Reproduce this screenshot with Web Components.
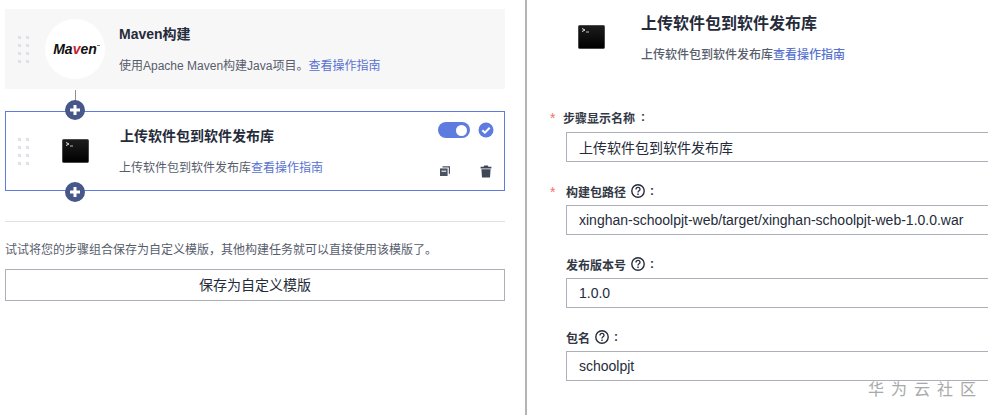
<!DOCTYPE html>
<html lang="zh">
<head>
<meta charset="utf-8">
<title>上传软件包到软件发布库</title>
<style>
    html, body { margin: 0; padding: 0; background: #fff; height: 100%; overflow: hidden; }
    body { font-family: "Liberation Sans", "Noto Sans CJK SC", sans-serif; color: #252b3a; }
</style>
</head>
<body>
<build-page>
    <step-list slot="left">
        <step-card title="Maven构建" guide>
            <span slot="desc">使用Apache Maven构建Java项目。</span>
            <maven-logo slot="icon"></maven-logo>
        </step-card>
        <step-card title="上传软件包到软件发布库" active guide>
            <span slot="desc">上传软件包到软件发布库</span>
            <term-icon slot="icon"></term-icon>
            <step-actions slot="actions"></step-actions>
        </step-card>
    </step-list>
    <step-form slot="right"></step-form>
</build-page>

<script>
    const FONT = '"Liberation Sans", "Noto Sans CJK SC", sans-serif';

    class BuildPage extends HTMLElement {
        connectedCallback() {
            this.attachShadow({ mode: 'open' });
            this.shadowRoot.innerHTML = `
                <style>
                    :host {
                        display: grid;
                        grid-template-columns: 525px 1fr;
                        height: 415px;
                        width: 988px;
                        position: relative;
                        overflow: hidden;
                        font-family: ${FONT};
                    }
                    .left {
                        padding: 9px 20px 0 5px;
                    }
                    .right {
                        border-left: 2px solid #b4b4b4;
                        min-width: 0;
                    }
                    hr {
                        border: 0;
                        border-top: 1px solid #dfe1e6;
                        margin: 30px 0 0;
                    }
                    p {
                        margin: 20px 0 0;
                        font-size: 12px;
                        line-height: 16px;
                        color: #575d6c;
                    }
                    button {
                        display: block;
                        box-sizing: border-box;
                        width: 100%;
                        height: 32px;
                        margin-top: 11px;
                        padding: 0 0 2px;
                        background: #fff;
                        border: 1px solid #adb0b8;
                        font: 14px ${FONT};
                        color: #252b3a;
                    }
                    .mark {
                        position: absolute;
                        left: 868px;
                        top: 380px;
                        font-size: 16px;
                        line-height: 20px;
                        letter-spacing: 7px;
                        color: #a9a9a9;
                        white-space: nowrap;
                    }
                </style>
                <div class="left">
                    <slot name="left"></slot>
                    <hr>
                    <p>试试将您的步骤组合保存为自定义模版，其他构建任务就可以直接使用该模版了。</p>
                    <button>保存为自定义模版</button>
                </div>
                <div class="right">
                    <slot name="right"></slot>
                </div>
                <div class="mark">华为云社区</div>
            `;
        }
    }

    class StepList extends HTMLElement {
        connectedCallback() {
            this.attachShadow({ mode: 'open' });
            this.shadowRoot.innerHTML = `
                <style>
                    :host {
                        display: flex;
                        flex-direction: column;
                        gap: 22px;
                    }
                </style>
                <slot></slot>
            `;
        }
    }

    class StepCard extends HTMLElement {
        connectedCallback() {
            this.attachShadow({ mode: 'open' });
            const title = this.getAttribute('title');
            const active = this.hasAttribute('active');
            const plus = `<svg width="20" height="20" viewBox="0 0 20 20"><circle cx="10" cy="10" r="10" fill="#47578a"/><path d="M10 5v10M5 10h10" stroke="#fff" stroke-width="3"/></svg>`;
            this.shadowRoot.innerHTML = `
                <style>
                    :host {
                        display: grid;
                        grid-template-columns: 40px 60px 1fr auto;
                        box-sizing: border-box;
                        height: 80px;
                        position: relative;
                        background: #f7f7f8;
                    }
                    :host([active]) {
                        grid-template-columns: 39px 60px 1fr auto;
                        background: #fff;
                        border: 1px solid #5e7ce0;
                    }
                    .grip {
                        display: grid;
                        grid-template-columns: 3px 3px;
                        gap: 5px;
                        align-content: center;
                        justify-content: center;
                        padding-right: 4px;
                    }
                    .grip i {
                        width: 3px;
                        height: 3px;
                        background: #dfe1e6;
                    }
                    .icon {
                        display: flex;
                        align-items: center;
                        justify-content: center;
                    }
                    .body {
                        padding: 15px 0 0 14px;
                    }
                    :host([active]) .body { padding: 14px 0 0 15px; }
                    :host([active]) .desc { margin-left: -1px; }
                    h3 {
                        margin: 0;
                        font-size: 14px;
                        line-height: 20px;
                        font-weight: 700;
                        color: #252b3a;
                    }
                    .desc {
                        margin-top: 12px;
                        font-size: 12px;
                        line-height: 20px;
                        color: #575d6c;
                        white-space: nowrap;
                    }
                    a {
                        color: #5872d0;
                        text-decoration: none;
                    }
                    .add {
                        position: absolute;
                        left: 59px;
                        width: 20px;
                        height: 20px;
                        display: block;
                    }
                    .add svg { display: block; }
                    .add.top { top: -12px; }
                    .add.bottom { bottom: -12px; }
                    .line {
                        position: absolute;
                        left: 69px;
                        top: -22px;
                        width: 1px;
                        height: 11px;
                        background: #8a8e99;
                    }
                </style>
                <div class="grip"><i></i><i></i><i></i><i></i><i></i><i></i><i></i><i></i></div>
                <div class="icon"><slot name="icon"></slot></div>
                <div class="body">
                    <h3>${title}</h3>
                    <div class="desc"><slot name="desc"></slot><a href="#">查看操作指南</a></div>
                </div>
                <slot name="actions"></slot>
                ${active ? `<span class="line"></span><span class="add top">${plus}</span><span class="add bottom">${plus}</span>` : ''}
            `;
        }
    }

    class MavenLogo extends HTMLElement {
        connectedCallback() {
            this.attachShadow({ mode: 'open' });
            this.shadowRoot.innerHTML = `
                <style>
                    :host {
                        display: flex;
                        align-items: center;
                        justify-content: center;
                        width: 60px;
                        height: 60px;
                        border-radius: 50%;
                        background: #fff;
                        font: italic 700 14px/1 ${FONT};
                        color: #111;
                    }
                    span { position: relative; }
                    span::after {
                        content: '';
                        position: absolute;
                        right: -3px;
                        top: 3px;
                        width: 3px;
                        height: 1px;
                        background: #777;
                    }
                    b { color: #c8202f; font-weight: 700; }
                </style>
                <span>Ma<b>v</b>en</span>
            `;
        }
    }

    class TermIcon extends HTMLElement {
        connectedCallback() {
            this.attachShadow({ mode: 'open' });
            this.shadowRoot.innerHTML = `
                <style>
                    :host { display: block; width: 27px; height: 24px; }
                    svg { display: block; }
                </style>
                <svg width="27" height="24" viewBox="0 0 27 24">
                    <defs>
                        <linearGradient id="g" x1="0" y1="0" x2="0" y2="1">
                            <stop offset="0" stop-color="#1d1d1d"/>
                            <stop offset="1" stop-color="#000"/>
                        </linearGradient>
                    </defs>
                    <rect x="0.5" y="0.5" width="26" height="23" rx="1" fill="url(#g)" stroke="#4a4a4a" stroke-width="1"/>
                    <path d="M4 3.5l3 1.5-3 1.5" fill="none" stroke="#e6e6e6" stroke-width="1"/>
                    <path d="M8 7h3" stroke="#bbb" stroke-width="1"/>
                </svg>
            `;
        }
    }

    class StepActions extends HTMLElement {
        connectedCallback() {
            this.attachShadow({ mode: 'open' });
            this.shadowRoot.innerHTML = `
                <style>
                    :host {
                        display: grid;
                        grid-template-columns: 32px 16px;
                        grid-template-rows: 16px 16px;
                        column-gap: 8px;
                        row-gap: 25px;
                        padding: 10px 10px 0 0;
                        justify-items: center;
                        align-items: center;
                    }
                    svg { display: block; }
                    .copy { justify-self: start; margin-left: 1px; }
                    .toggle {
                        width: 32px;
                        height: 16px;
                        border-radius: 8px;
                        background: #5e7ce0;
                        position: relative;
                    }
                    .toggle i {
                        position: absolute;
                        right: 3px;
                        top: 2.5px;
                        width: 11px;
                        height: 11px;
                        border-radius: 50%;
                        background: #fff;
                    }
                </style>
                <div class="toggle"><i></i></div>
                <svg width="16" height="16" viewBox="0 0 16 16">
                    <circle cx="8" cy="8" r="7.5" fill="#5e7ce0"/>
                    <path d="M4.3 8.2l2.6 2.5 4.8-5" fill="none" stroke="#fff" stroke-width="2"/>
                </svg>
                <svg class="copy" width="12" height="12" viewBox="0 0 12 12">
                    <path d="M3.5 1.2h7.5v7.6h-1.2V2.4H3.5z" fill="#4a5264"/>
                    <path d="M1 3.4h7.6v7.6H1z" fill="#4a5264"/>
                    <path d="M2.5 6.2h4.6" stroke="#fff" stroke-width="1.1"/>
                </svg>
                <svg width="12" height="13" viewBox="0 0 12 13">
                    <path d="M4.2 0.6h3.6l.6 1.2H11.4v1.6H.6V1.8h3z" fill="#3f4656"/>
                    <path d="M1.4 4.2h9.2l-.6 8.2H2z" fill="#3f4656"/>
                </svg>
            `;
        }
    }

    class FormField extends HTMLElement {
        connectedCallback() {
            this.attachShadow({ mode: 'open' });
            const required = this.hasAttribute('required');
            const help = this.hasAttribute('help');
            const helpIcon = `<svg class="help" width="14" height="14" viewBox="0 0 14 14"><circle cx="7" cy="7" r="6.2" fill="none" stroke="#252b3a" stroke-width="1.4"/><path d="M5 5.4c0-2.6 4-2.6 4 0 0 1.5-2 1.4-2 3" fill="none" stroke="#252b3a" stroke-width="1.3"/><path d="M7 9.6v1.4" stroke="#252b3a" stroke-width="1.4"/></svg>`;
            this.shadowRoot.innerHTML = `
                <style>
                    :host {
                        display: block;
                        position: relative;
                    }
                    label {
                        display: flex;
                        align-items: center;
                        gap: 4px;
                        height: 16px;
                        margin-top: 1px;
                        font-size: 12px;
                        font-weight: 700;
                        color: #333845;
                        white-space: nowrap;
                    }
                    :host([plain]) label { margin-left: -3px; }
                    .star {
                        position: absolute;
                        left: -16px;
                        top: 2px;
                        font-size: 14px;
                        line-height: 16px;
                        color: #f66f6a;
                    }
                    .help { margin-left: 1px; }
                    .colon { margin-left: 1px; }
                    :host([plain]) .colon { margin-left: 2px; }
                    .box {
                        box-sizing: border-box;
                        height: 30px;
                        margin-top: 6px;
                        margin-right: -10px;
                        padding-left: 12px;
                        border: 1px solid #adb0b8;
                        font-size: 14px;
                        line-height: 29px;
                        color: #252b3a;
                        white-space: nowrap;
                    }
                    :host([plain]) .box { margin-top: 7px; line-height: 31px; }
                </style>
                ${required ? '<span class="star">*</span>' : ''}
                <label><slot></slot>${help ? helpIcon : ''}<span class="colon">:</span></label>
                <div class="box">${this.getAttribute('value')}</div>
            `;
        }
    }

    class StepForm extends HTMLElement {
        connectedCallback() {
            this.attachShadow({ mode: 'open' });
            this.shadowRoot.innerHTML = `
                <style>
                    :host {
                        display: block;
                        overflow: hidden;
                        height: 415px;
                        padding-left: 39px;
                    }
                    .head {
                        display: grid;
                        grid-template-columns: 63px 1fr;
                        padding: 14px 0 0 12px;
                    }
                    .icon { padding-top: 11px; }
                    h2 {
                        margin: 0;
                        font-size: 16px;
                        line-height: 20px;
                        font-weight: 700;
                        color: #252b3a;
                    }
                    .desc {
                        margin-top: 11px;
                        font-size: 12px;
                        line-height: 20px;
                        font-weight: 500;
                        color: #575d6c;
                        white-space: nowrap;
                    }
                    a { color: #5872d0; text-decoration: none; }
                    .fields {
                        display: flex;
                        flex-direction: column;
                        gap: 20px;
                        margin-top: 43px;
                    }
                </style>
                <div class="head">
                    <div class="icon"><term-icon></term-icon></div>
                    <div>
                        <h2>上传软件包到软件发布库</h2>
                        <div class="desc">上传软件包到软件发布库<a href="#">查看操作指南</a></div>
                    </div>
                </div>
                <div class="fields">
                    <form-field required plain value="上传软件包到软件发布库">步骤显示名称</form-field>
                    <form-field required help value="xinghan-schoolpjt-web/target/xinghan-schoolpjt-web-1.0.0.war">构建包路径</form-field>
                    <form-field help value="1.0.0">发布版本号</form-field>
                    <form-field help value="schoolpjt">包名</form-field>
                </div>
            `;
        }
    }

    customElements.define('build-page', BuildPage);
    customElements.define('step-list', StepList);
    customElements.define('step-card', StepCard);
    customElements.define('maven-logo', MavenLogo);
    customElements.define('term-icon', TermIcon);
    customElements.define('step-actions', StepActions);
    customElements.define('form-field', FormField);
    customElements.define('step-form', StepForm);
</script>
</body>
</html>
